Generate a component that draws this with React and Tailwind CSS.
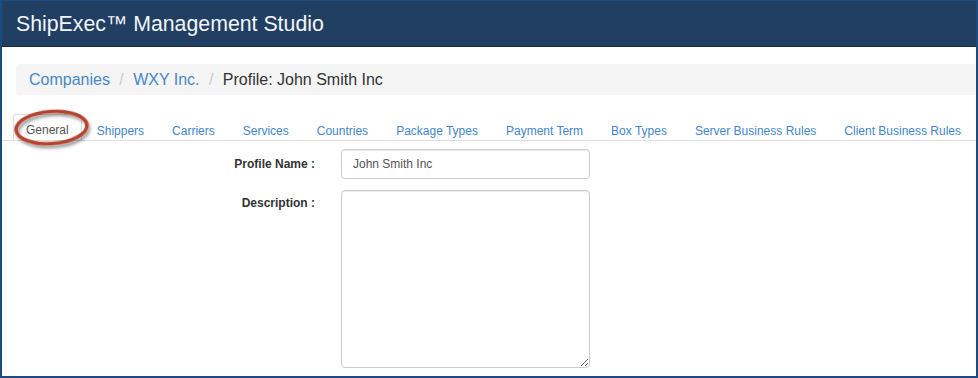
import React from "react";

const tabs = [
  "General",
  "Shippers",
  "Carriers",
  "Services",
  "Countries",
  "Package Types",
  "Payment Term",
  "Box Types",
  "Server Business Rules",
  "Client Business Rules",
];

export default function App() {
  return (
    <div
      className="relative w-[978px] h-[378px] overflow-hidden bg-white border-x-2 border-b-2 border-t border-[#1e4b7f] flex flex-col"
      style={{ fontFamily: '"Liberation Sans", Arial, sans-serif' }}
    >
      <header className="h-[46px] shrink-0 bg-[#213f62] border-b border-[#16283c] flex items-center pl-[14px] pt-[3px] text-[21.3px] text-[#f3f5f8] leading-none">
        ShipExec™ Management Studio
      </header>

      <div className="pl-[14px] pt-[17px] shrink-0">
        <nav className="h-[31px] bg-[#f5f5f5] rounded-l-[4px] flex items-center gap-[9.4px] pl-[13px] text-[16px] leading-none">
          <span className="text-[#4a87c6]">Companies</span>
          <span className="text-[#cccccc]">/</span>
          <span className="text-[#4a87c6]">WXY Inc.</span>
          <span className="text-[#cccccc]">/</span>
          <span className="text-[#333333]">Profile: John Smith Inc</span>
        </nav>
      </div>

      <ul className="mt-[19px] pl-[11px] flex border-b border-[#dddddd] shrink-0 whitespace-nowrap">
        {tabs.map((t, i) => (
          <li
            key={t}
            className={
              i === 0
                ? "h-[26px] px-[12px] mr-[2px] pt-[8px] text-[12px] leading-[14px] text-[#555555] border border-b-0 border-[#dddddd] rounded-t-[4px] -mb-px bg-white"
                : "h-[26px] px-[12px] mr-[2px] pt-[9px] text-[12px] leading-[14px] text-[#4287cb] border border-transparent border-b-0"
            }
          >
            {t}
          </li>
        ))}
      </ul>

      <div className="mt-[8px] flex flex-col gap-[11px]">
        <div className="flex items-start">
          <div className="w-[313px] text-right pt-[8px] text-[12px] leading-[14px] font-bold text-[#333333]">
            Profile Name :
          </div>
          <div className="ml-[26px] w-[249px] h-[30px] border border-[#cccccc] rounded-[4px] shadow-[inset_0_1px_1px_rgba(0,0,0,0.075)] flex items-center px-[11px] text-[12px] text-[#555555]">
            John Smith Inc
          </div>
        </div>
        <div className="flex items-start">
          <div className="w-[313px] text-right pt-[6px] text-[12px] leading-[14px] font-bold text-[#333333]">
            Description :
          </div>
          <textarea
            readOnly
            className="ml-[26px] w-[249px] h-[178px] border border-[#cccccc] rounded-[4px] shadow-[inset_0_1px_1px_rgba(0,0,0,0.075)] outline-none"
          />
        </div>
      </div>

      <svg
        className="absolute left-0 top-[98px] pointer-events-none"
        width="110"
        height="62"
        viewBox="0 0 110 62"
      >
        <defs>
          <filter id="sh" x="-20%" y="-30%" width="150%" height="180%">
            <feDropShadow dx="1.5" dy="3" stdDeviation="1.8" floodColor="#000" floodOpacity="0.4" />
          </filter>
        </defs>
        <ellipse
          cx="49.5"
          cy="28.5"
          rx="35.5"
          ry="16"
          fill="none"
          stroke="#b3452f"
          strokeWidth="3.5"
          transform="rotate(-4 49.5 28.5)"
          filter="url(#sh)"
        />
      </svg>
    </div>
  );
}
